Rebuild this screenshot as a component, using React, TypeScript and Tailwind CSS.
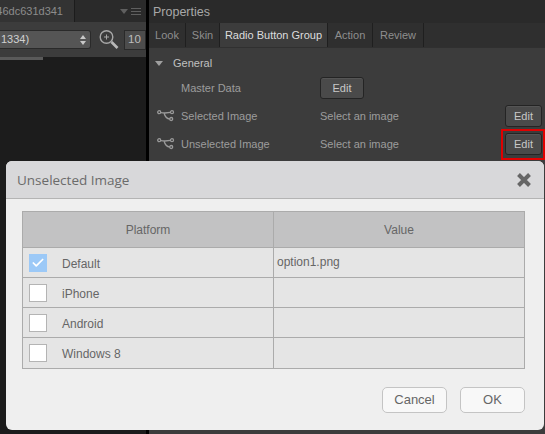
import { Check } from "lucide-react"

const tabs = [
  { label: "Look", width: "w-[37px]" },
  { label: "Skin", width: "w-[34px]" },
  { label: "Radio Button Group", width: "w-[108px]", active: true },
  { label: "Action", width: "w-[45px]" },
  { label: "Review", width: "w-[51px]" },
]

const rows = [
  { platform: "Default", value: "option1.png", checked: true },
  { platform: "iPhone", value: "" },
  { platform: "Android", value: "" },
  { platform: "Windows 8", value: "" },
]

function LinkIcon() {
  return (
    <svg width="18" height="12" viewBox="0 0 18 12" fill="none" stroke="#9a9a9a" strokeWidth="1.3">
      <circle cx="2.2" cy="2.2" r="1.5" />
      <circle cx="15" cy="2.2" r="1.5" />
      <circle cx="14.2" cy="9" r="1.5" />
      <path d="M3.7 2.6C6 3 7 3 8 3L13.5 2.4M7 3C8 6.5 9 8.8 12.7 9" />
    </svg>
  )
}

function EditButton({ className = "w-[37px]" }: { className?: string }) {
  return (
    <button className={`block h-[22px] ${className} rounded-[3px] border border-[#242424] bg-[#4a4a4a] text-[11px] text-[#c8c8c8] [box-shadow:inset_0_1px_0_#555]`}>
      Edit
    </button>
  )
}

function PropertyRow({ label, red }: { label: string; red?: boolean }) {
  return (
    <div className="flex h-[28px] items-center pr-[3px] pl-[8px] text-[11px] text-[#9c9c9c]">
      <div className="w-[24px]">
        <LinkIcon />
      </div>
      <span className="w-[139px]">{label}</span>
      <span className="flex-1">Select an image</span>
      <div className="relative">
        <EditButton />
        {red && <div className="absolute -top-[4px] -right-[3px] -bottom-[5px] -left-[4px] border-2 border-[#e00000]" />}
      </div>
    </div>
  )
}

function LeftPanel() {
  return (
    <div className="flex w-[146px] shrink-0 flex-col bg-[#1c1c1c]">
      <div className="flex h-[22px] bg-[#2a2a2a]">
        <div className="flex w-[75px] items-center justify-end overflow-hidden border-r border-[#1c1c1c] bg-[#333333] pr-[11px] text-[11px] whitespace-nowrap text-[#8c8c8c]">
          <span className="shrink-0">46dc631d341</span>
        </div>
        <div className="flex flex-1 items-center justify-end gap-[3px] pr-[5px]">
          <div className="h-0 w-0 border-x-[4px] border-t-[5px] border-x-transparent border-t-[#5f5f5f]" />
          <div className="flex w-[10px] flex-col gap-[2px]">
            <div className="h-px bg-[#5f5f5f]" />
            <div className="h-px bg-[#5f5f5f]" />
            <div className="h-px bg-[#5f5f5f]" />
          </div>
        </div>
      </div>
      <div className="flex h-[35px] items-center bg-[#3c3c3c]">
        <div className="flex h-[19px] w-[91px] items-center justify-between rounded-r-[3px] border border-l-0 border-[#2a2a2a] bg-[#555555] pr-[4px] pl-[1px] text-[11px] text-[#d0d0d0]">
          <span>1334)</span>
          <span className="flex flex-col gap-[2px]">
            <span className="h-0 w-0 border-x-[3px] border-b-[4px] border-x-transparent border-b-[#c8c8c8]" />
            <span className="h-0 w-0 border-x-[3px] border-t-[4px] border-x-transparent border-t-[#c8c8c8]" />
          </span>
        </div>
        <svg className="ml-[8px]" width="20" height="22" viewBox="0 0 20 22" fill="none">
          <circle cx="7.5" cy="8" r="6.3" stroke="#a8a8a8" strokeWidth="1.4" />
          <path d="M5 8h5M7.5 5.5v5" stroke="#a8a8a8" />
          <path d="M12.5 13l6 6" stroke="#b8b8b8" strokeWidth="2.6" />
        </svg>
        <div className="ml-[5px] flex h-[20px] flex-1 items-center border border-[#2a2a2a] bg-[#4c4c4c] pl-[3px] text-[11.5px] text-[#bdbdbd]">
          10
        </div>
      </div>
      <div className="h-[3px] w-[43px] bg-[#5a5a5a]" />
    </div>
  )
}

function RightPanel() {
  return (
    <div className="flex flex-1 flex-col bg-[#3c3c3c]">
      <div className="flex h-[23px] items-center bg-[#2a2a2a] pt-[1px] pl-[4px] text-[12.5px] text-[#a8a8a8]">Properties</div>
      <div className="flex h-[25px] border-b border-[#303030] bg-[#2f2f2f]">
        {tabs.map((tab) => (
          <div
            key={tab.label}
            className={`flex ${tab.width} items-center justify-center border-r border-[#1f1f1f] text-[11px] whitespace-nowrap ${
              tab.active ? "bg-[#3c3c3c] text-[#dcdcdc]" : "text-[#8e8e8e]"
            }`}
          >
            {tab.label}
          </div>
        ))}
      </div>
      <div className="flex h-[26px] items-center pt-[4px] pl-[6px] text-[11px] text-[#c0c0c0]">
        <div className="h-0 w-0 border-x-[4.5px] border-t-[5px] border-x-transparent border-t-[#a0a0a0]" />
        <span className="ml-[10px]">General</span>
      </div>
      <div className="flex h-[28px] items-center pl-[32px] text-[11px] text-[#9c9c9c]">
        <span className="w-[139px]">Master Data</span>
        <EditButton className="w-[44px]" />
      </div>
      <PropertyRow label="Selected Image" />
      <PropertyRow label="Unselected Image" red />
    </div>
  )
}

function ImageDialog() {
  return (
    <div className="absolute top-[161px] left-[6px] flex h-[269px] w-[538px] flex-col overflow-hidden rounded-[6px] bg-[#efefef]">
      <div className="flex h-[38px] shrink-0 items-center justify-between border-b border-[#b4b4b4] bg-[#d8d8da] px-[11px]">
        <span className="pt-[2px] font-['Open_Sans',sans-serif] text-[13.5px] text-[#6b6b6b]">Unselected Image</span>
        <svg width="14" height="14" viewBox="0 0 14 14" stroke="#666666" strokeWidth="4" className="mr-[2px]">
          <path d="M1.5 1.5l11 11M12.5 1.5l-11 11" />
        </svg>
      </div>
      <div className="mt-[12px] ml-[16px] w-[503px] border border-[#ababab] text-[12px]">
        <div className="flex h-[36px] border-b border-[#ababab] bg-[#c2c2c3] text-[#666666]">
          <div className="flex w-[251px] items-center justify-center border-r border-[#ababab]">Platform</div>
          <div className="flex flex-1 items-center justify-center">Value</div>
        </div>
        {rows.map((row, index) => (
          <div
            key={row.platform}
            className={`flex h-[30px] bg-[#e5e5e5] text-[#666666] ${index < rows.length - 1 ? "border-b border-[#ababab]" : ""}`}
          >
            <div className="flex w-[251px] items-center border-r border-[#ababab] pl-[6px]">
              {row.checked ? (
                <div className="flex h-[18px] w-[18px] items-center justify-center bg-[#9cc9f7]">
                  <Check size={14} strokeWidth={3} className="text-white" />
                </div>
              ) : (
                <div className="h-[18px] w-[18px] border border-[#b4b4b4] bg-white" />
              )}
              <span className="ml-[15px] pt-[2px]">{row.platform}</span>
            </div>
            <div className="flex-1 pt-[5px] pl-[3px]">{row.value}</div>
          </div>
        ))}
      </div>
      <div className="mt-[18px] ml-[376px] flex gap-[13px] text-[13px] text-[#666666]">
        <button className="h-[26px] w-[65px] rounded-[5px] border border-[#c4c4c4] bg-[#f8f8f8]">Cancel</button>
        <button className="h-[26px] w-[65px] rounded-[5px] border border-[#c4c4c4] bg-[#f8f8f8]">OK</button>
      </div>
    </div>
  )
}

export default function App() {
  return (
    <div className="relative flex h-[434px] w-[545px] overflow-hidden bg-black font-['Liberation_Sans',sans-serif]">
      <LeftPanel />
      <div className="w-[3px] shrink-0 bg-black" />
      <RightPanel />
      <ImageDialog />
    </div>
  )
}
